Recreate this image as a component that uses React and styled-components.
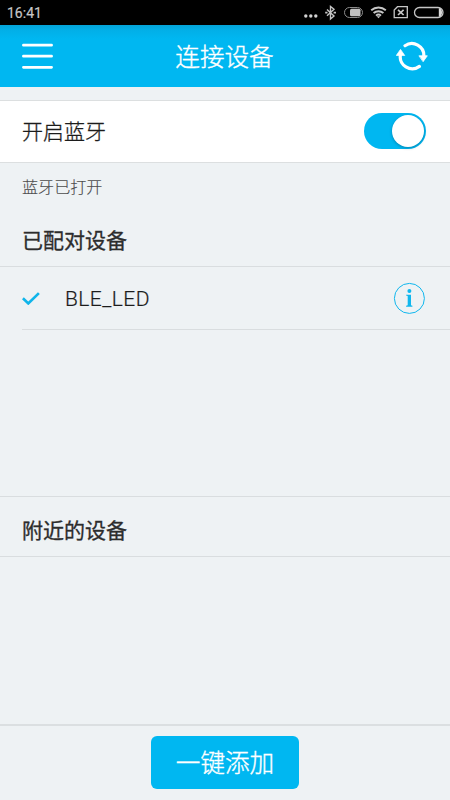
import React, { useState } from 'react';
import styled, { createGlobalStyle } from 'styled-components';

const GlobalStyle = createGlobalStyle`
  * {
    box-sizing: border-box;
  }

  body {
    margin: 0;
    background: #eef2f4;
    font-family: Roboto, 'Noto Sans CJK SC', sans-serif;
    color: #1c1c1c;
  }
`;

const Screen = styled.div`
  display: flex;
  flex-direction: column;
  width: 450px;
  height: 800px;
  overflow: hidden;
  background: #eef2f4;
`;

const StatusBar = styled.div`
  display: flex;
  justify-content: space-between;
  flex: none;
  height: 25px;
  padding-left: 7px;
  background: #000;
`;

const Clock = styled.span`
  font-size: 14px;
  line-height: 26px;
  color: #c6c6c6;
  -webkit-text-stroke: 0.2px #c6c6c6;
`;

const Header = styled.header`
  display: flex;
  align-items: center;
  justify-content: space-between;
  flex: none;
  height: 62px;
  padding: 0 20px 0 22px;
  background: linear-gradient(#04a4d8 0, #02afe7 5px, #00b7f1 14px);
`;

const IconButton = styled.button`
  display: flex;
  padding: 0;
  border: 0;
  background: none;
`;

const Title = styled.h1`
  margin: 0;
  padding-top: 4px;
  font-size: 24.6px;
  line-height: 36px;
  font-weight: 300;
  color: #fff;
  -webkit-text-stroke: 0.35px #fff;
`;

const SwitchRow = styled.label`
  display: flex;
  align-items: center;
  justify-content: space-between;
  flex: none;
  height: 63px;
  margin-top: 13px;
  padding: 0 24px 2px 22px;
  background: #fff;
  border-top: 1px solid #dcdfe0;
  border-bottom: 1px solid #dcdfe0;
  font-size: 21px;
  line-height: 30px;
  font-weight: 300;
`;

const SwitchLabel = styled.span`
  padding-top: 2px;
  -webkit-text-stroke: 0.3px #1c1c1c;
`;

const Switch = styled.button`
  display: flex;
  align-items: center;
  justify-content: ${props => props.$on ? 'flex-end' : 'flex-start'};
  width: 62px;
  height: 36px;
  padding: 0 2px;
  border: 0;
  border-radius: 18px;
  background: ${props => props.$on ? '#00b7f1' : '#d5d9db'};
`;

const Knob = styled.span`
  width: 32px;
  height: 32px;
  border-radius: 50%;
  background: #fff;
  box-shadow: 0 1px 3px rgba(0, 40, 60, 0.35);
`;

const Note = styled.p`
  flex: none;
  height: 49px;
  margin: 0;
  padding-left: 22px;
  font-size: 16.1px;
  line-height: 50px;
  font-weight: 300;
  color: #4c4c4c;
  -webkit-text-stroke: 0.15px #4c4c4c;
`;

const Section = styled.section`
  display: flex;
  flex-direction: column;
  flex: none;
  height: ${props => props.$height}px;
`;

const SectionTitle = styled.h2`
  flex: none;
  height: ${props => props.$height}px;
  margin: 0;
  padding: ${props => props.$top}px 0 0 22px;
  border-bottom: 1px solid #d9dddf;
  font-size: 21px;
  line-height: 30px;
  font-weight: 400;
  color: #2c2c2c;
  -webkit-text-stroke: 0.3px #2c2c2c;
`;

const DeviceRow = styled.div`
  display: flex;
  align-items: center;
  flex: none;
  height: 63px;
  margin-left: 22px;
  padding-right: 25px;
  border-bottom: 1px solid #d9dddf;
`;

const DeviceName = styled.span`
  flex: 1;
  margin-left: 25px;
  padding-top: 2px;
  font-size: 21px;
  font-weight: 300;
  letter-spacing: 0.45px;
  -webkit-text-stroke: 0.2px #1c1c1c;
`;

const Divider = styled.hr`
  flex: none;
  width: 100%;
  height: 1px;
  margin: auto 0 0;
  border: 0;
  background: #d9dddf;
`;

const Footer = styled.footer`
  display: flex;
  justify-content: center;
  flex: none;
  height: 76px;
  margin-top: auto;
  padding-top: 10px;
  border-top: 2px solid #dbdfe1;
`;

const AddButton = styled.button`
  width: 148px;
  height: 53px;
  padding: 3px 0 0;
  border: 0;
  border-radius: 6px;
  background: #00b7f1;
  color: #fff;
  font: 300 24.6px/50px Roboto, 'Noto Sans CJK SC', sans-serif;
  -webkit-text-stroke: 0.35px #fff;
`;

const StatusIcons = () => (
  <svg width="155" height="25" fill="none" stroke="#c6c6c6">
    <g fill="#d2d2d2" stroke="none">
      <circle cx="10.8" cy="16" r="1.7" />
      <circle cx="15.8" cy="16" r="1.7" />
      <circle cx="20.8" cy="16" r="1.7" />
    </g>
    <path d="M32 9.5l7 6.5-3.5 3V6.5L39 9.3l-7 6.5" strokeWidth="1.4" />
    <path d="M30.2 12.7h2.3M38.6 12.7h2.4" strokeWidth="1.8" />
    <rect x="49.5" y="7.5" width="18" height="10" rx="5" stroke="#8c8c8c" />
    <rect x="55" y="8.8" width="10.5" height="7.4" rx="1.5" fill="#c0c0c0" stroke="none" />
    <g strokeWidth="1.9">
      <path d="M76.2 10.2c4.2-3.7 10.4-3.7 14.6 0" />
      <path d="M78.6 13c2.8-2.4 7-2.4 9.8 0" />
      <path d="M81 15.6c1.4-1.2 3.6-1.2 5 0" />
    </g>
    <path d="M81.6 16.2h3.8l-1.9 2z" fill="#c6c6c6" stroke="none" />
    <path d="M102.5 6.7h9.8v11H99.2V10z" strokeWidth="1.3" />
    <path d="M103 9.8l5.6 5.2M108.6 9.8l-5.6 5.2" strokeWidth="1.7" />
    <rect x="119.5" y="7.5" width="28.5" height="10" rx="5" strokeWidth="1.3" />
    <path d="M143.8 8.2h1c3 1.6 3 7 0 8.6h-1z" fill="#d8d8d8" stroke="none" />
  </svg>
);

const MenuIcon = () => (
  <svg width="31" height="27" stroke="#fff" strokeWidth="2.7" strokeLinecap="round">
    <path d="M1.4 2.2h28.2M1.4 13.2h28.2M1.4 24.3h28.2" />
  </svg>
);

const RefreshIcon = () => (
  <svg width="34" height="30" fill="none" stroke="#fff" strokeWidth="3.2" strokeLinecap="round">
    <path d="M9 4.7A12 12 0 0 1 27.8 15.4" />
    <path d="M23.4 25.4A12 12 0 0 1 4.5 13.5" />
    <path d="M23.3 14.8h8L27.3 20.4zM.5 14.2L4.5 8.4l4 5.8z" fill="#fff" strokeWidth=".8" />
  </svg>
);

const CheckIcon = () => (
  <svg width="18" height="14" fill="none" stroke="#10b5ea" strokeWidth="2.7">
    <path d="M.9 7.3l5.4 5.1L16.9 2.1" />
  </svg>
);

const InfoIcon = () => (
  <svg width="32" height="32" fill="#10b7ee">
    <circle cx="16.4" cy="16.4" r="15" fill="none" stroke="#10b7ee" strokeWidth="1" />
    <circle cx="16.4" cy="8.9" r="2" />
    <path d="M13.1 12.7H18v10.6l1.4.5v1h-6.3v-1l1.6-.5V14l-1.6-.4z" />
  </svg>
);

const App = () => {
  const [bluetoothOn, setBluetoothOn] = useState(true);

  return (
    <>
      <GlobalStyle />
      <Screen>
        <StatusBar>
          <Clock>16:41</Clock>
          <StatusIcons />
        </StatusBar>
        <Header>
          <IconButton aria-label="菜单"><MenuIcon /></IconButton>
          <Title>连接设备</Title>
          <IconButton aria-label="刷新"><RefreshIcon /></IconButton>
        </Header>

        <SwitchRow>
          <SwitchLabel>开启蓝牙</SwitchLabel>
          <Switch
            $on={bluetoothOn}
            role="switch"
            aria-checked={bluetoothOn}
            onClick={() => setBluetoothOn(!bluetoothOn)}
          >
            <Knob />
          </Switch>
        </SwitchRow>
        <Note>蓝牙已打开</Note>

        <Section $height={285}>
          <SectionTitle $height={55} $top={14}>已配对设备</SectionTitle>
          <DeviceRow>
            <CheckIcon />
            <DeviceName>BLE_LED</DeviceName>
            <IconButton aria-label="详情"><InfoIcon /></IconButton>
          </DeviceRow>
          <Divider />
        </Section>

        <Section $height={60}>
          <SectionTitle $height={60} $top={19}>附近的设备</SectionTitle>
        </Section>

        <Footer>
          <AddButton>一键添加</AddButton>
        </Footer>
      </Screen>
    </>
  );
};

export default App;
